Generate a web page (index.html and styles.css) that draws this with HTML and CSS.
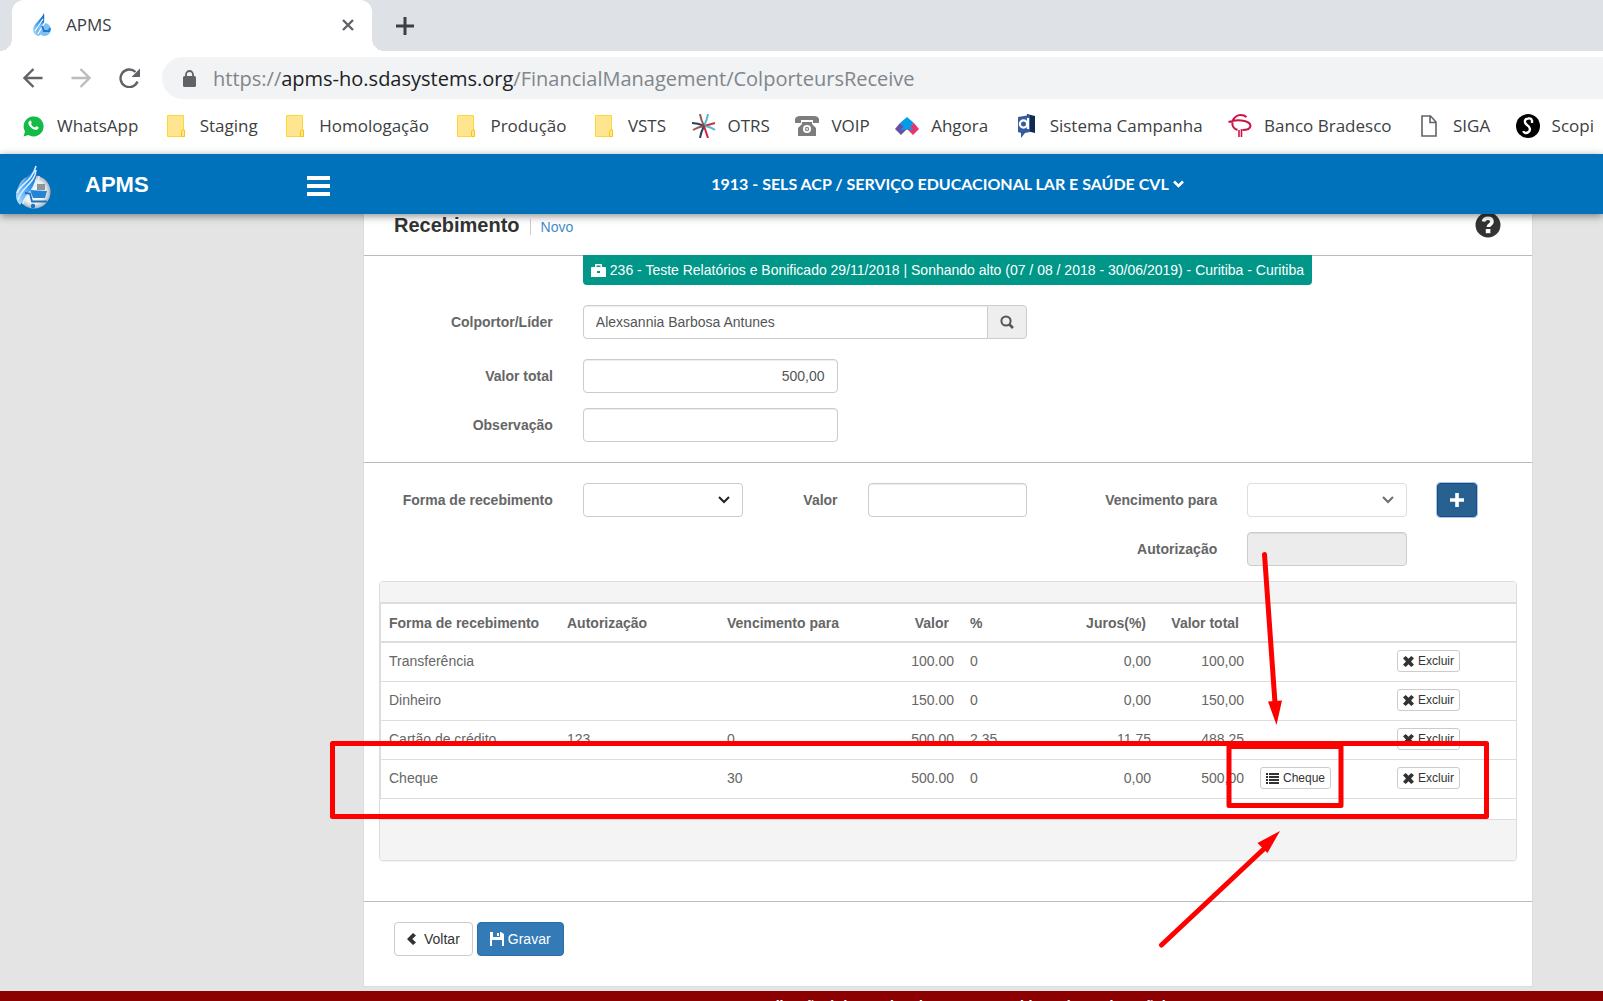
FILE: index.html
```html
<!DOCTYPE html>
<html lang="pt-BR">
<head>
<meta charset="utf-8">
<title>APMS</title>
<link rel="stylesheet" href="styles.css">
</head>
<body>
<svg class="defs" aria-hidden="true">
  <defs>
    <linearGradient id="drop" x1="0" y1="1" x2="1" y2="0"><stop offset="0" stop-color="#bfe6ff"/><stop offset=".5" stop-color="#3d9df0"/><stop offset="1" stop-color="#0b62b8"/></linearGradient>
    <radialGradient id="globe"><stop offset="0" stop-color="#ffffff"/><stop offset=".7" stop-color="#eceff2"/><stop offset="1" stop-color="#a9b4bf"/></radialGradient>
  </defs>
  <symbol id="folder" viewBox="0 0 18 22"><path d="M.5.5h16V15l1 1v5.500H.5z" fill="#ffe58f" stroke="#fdd835"/><path d="M14.500 21.500v-5l1-1.500h2v6.500z" fill="#ffe58f" stroke="#f5c518"/></symbol>
  <symbol id="times" viewBox="0 0 12 12"><path d="M3 0l3 3 3-3 3 2.500L8.800 6l3.200 3.500L9 12 6 9l-3 3-3-2.500L3.200 6 0 2.500z" fill="#333"/></symbol>
</svg>

<header class="browser">
  <div class="tabs">
    <div class="tab">
      <svg class="favicon" viewBox="0 0 20 24"><path d="M12 0C9 7 1 11 1 17c0 3 3 6 6 6 4-4 6-14 5-23z" fill="url(#drop)"/><circle cx="12.500" cy="16.500" r="6.500" fill="#7cc0f5"/><path d="M3 18l8-12M6 21l7-12" stroke="#fff" stroke-width="1.200"/><path d="M10 13l2 5h5l1-3" fill="none" stroke="#1e7ad0" stroke-width="2"/></svg>
      <span class="tab-title">APMS</span>
      <button class="icon-button" aria-label="Fechar guia"><svg width="14" height="14" viewBox="0 0 14 14"><path d="M2 2l10 10M12 2L2 12" stroke="#5f6368" stroke-width="2.400"/></svg></button>
    </div>
    <button class="icon-button new-tab" aria-label="Nova guia"><svg width="18" height="18" viewBox="0 0 18 18"><path d="M9 0v18M0 9h18" stroke="#3c4043" stroke-width="3"/></svg></button>
  </div>
  <div class="toolbar">
    <button class="icon-button" aria-label="Voltar página"><svg width="20" height="20" viewBox="0 0 20 20"><path d="M19.500 10H2M10.500 1L1.500 10l9 9" fill="none" stroke="#5f6368" stroke-width="2.400"/></svg></button>
    <button class="icon-button" aria-label="Avançar página"><svg width="20" height="20" viewBox="0 0 20 20"><path d="M.5 10H18M9.500 1l9 9-9 9" fill="none" stroke="#babcbe" stroke-width="2.400"/></svg></button>
    <button class="icon-button" aria-label="Recarregar"><svg width="22" height="20" viewBox="0 0 22 20"><path d="M18.500 13.500A8.800 8.800 0 1 1 16.500 4" fill="none" stroke="#5f6368" stroke-width="2.400"/><path d="M21 .5V9h-8.500z" fill="#5f6368"/></svg></button>
    <div class="address">
      <svg width="13" height="17" viewBox="0 0 13 17"><rect y="6" width="13" height="11" rx="1.500" fill="#5f6368"/><path d="M3 7V4.500a3.500 3.500 0 0 1 7 0V7" fill="none" stroke="#5f6368" stroke-width="1.800"/></svg>
      <span class="url">https://<b>apms-ho.sdasystems.org</b>/FinancialManagement/ColporteursReceive</span>
    </div>
  </div>
  <nav class="bookmarks" aria-label="Favoritos">
    <a href="#"><svg height="22" viewBox="0 0 21 22"><path d="M1 21.500l1.500-5A10 10 0 1 1 6 20z" fill="#12bb45"/><path d="M6.500 6.500c1-1.500 2-1 2.500.5s-.5 1.500-.5 2c1 2 2 3 4 3.500.5 0 1-1.500 1.500-1.300 2.500 1 2.500 1.300 1.500 2.800-2 2-6 0-7.500-2-1.500-1.500-3-4-1.500-5.500z" fill="#fff"/></svg>WhatsApp</a>
    <a href="#"><svg height="22"><use href="#folder"/></svg>Staging</a>
    <a href="#"><svg height="22"><use href="#folder"/></svg>Homologação</a>
    <a href="#"><svg height="22"><use href="#folder"/></svg>Produção</a>
    <a href="#"><svg height="22"><use href="#folder"/></svg>VSTS</a>
    <a href="#"><svg height="24" viewBox="0 0 24 24" fill="none" stroke-width="2"><path d="M12 12Q16 11 23 9" stroke="#b83b4c"/><path d="M12 12Q15 6 16 0M12 12Q19 13 23 16" stroke="#59b7cc"/><path d="M8 0Q9 6 12 12" stroke="#9c5a55"/><path d="M12 12Q6 9 0 9" stroke="#27425c"/><path d="M12 12Q6 13 1 16" stroke="#9c5a55"/><path d="M12 12Q9 18 8 24" stroke="#27425c"/><path d="M12 12Q14 18 16 24" stroke="#d02044"/></svg>OTRS</a>
    <a href="#"><svg height="20" viewBox="0 0 24 20"><path d="M0 7V3q1-3 5-3h14q4 0 5 3v4h-6V4H6v3zM7 6h10v2l4 4v8H3v-8l4-4z" fill="#7d7d7d"/><circle cx="12" cy="13" r="4" fill="#fff"/><circle cx="12" cy="13" r="2.200" fill="#888"/><circle cx="12" cy="13" r=".9" fill="#fff"/></svg>VOIP</a>
    <a href="#"><svg height="18" viewBox="0 0 24 18"><path d="M12 0l7 6-7 7-7-7z" fill="#009ee8"/><path d="M5 6l7 6-6 6-6-6z" fill="#6650a4"/><path d="M19 6l5 6-6 6-6-6z" fill="#e9336d"/><path d="M12 6l6 6-1 1-5-1-5 1-1-1z" fill="#009ee8"/></svg>Ahgora</a>
    <a href="#"><svg height="24" viewBox="0 0 18 24"><path d="M10 0l8 2v17l-8-2z" fill="#102a55"/><path d="M1 3l12-2v17l-5 1-4 5v-5l-3-1z" fill="#365d9c"/><circle cx="6.500" cy="10" r="3.600" fill="none" stroke="#fff" stroke-width="2.200"/><path d="M11 4v11" stroke="#fff" stroke-width="2.200"/></svg>Sistema Campanha</a>
    <a href="#"><svg height="23" viewBox="0 0 23 23" fill="none" stroke="#cf1244" stroke-width="2"><path d="M0 8q8-3 16-1 6 1.500 6 5c-.5 3-4 4-8 4M4 7Q7 1 12 1q4 0 6 2M4 8q-1 6 5 8"/><path d="M10.500 16v7M13 15v8" stroke-width="1.600"/></svg>Banco Bradesco</a>
    <a href="#"><svg height="22" viewBox="0 0 16 22" fill="none" stroke="#5f6368" stroke-width="1.600"><path d="M1 1h8.500L15 7v14H1zM9 1v6.500h6"/></svg>SIGA</a>
    <a href="#"><svg height="24" viewBox="0 0 24 24"><circle cx="12" cy="12" r="12" fill="#000"/><path d="M16 6q-1-2-4-1.500C8 5 8 9 11 11s4 5 1.500 7-5 .5-5-1M16 6v3" fill="none" stroke="#fff" stroke-width="2.400"/></svg>Scopi</a>
  </nav>
</header>

<div class="appbar">
  <a class="brand" href="#">
    <svg width="36" height="48" viewBox="0 0 36 48"><circle cx="19" cy="30" r="16.500" fill="url(#globe)"/><path d="M22 0C18 15 1 20 1 34c0 4 2 7 4 9C12 34 24 22 22 0z" fill="url(#drop)"/><path d="M3 38C6 25 20 22 21 8M8 42C10 30 24 26 24 14M2 31C5 22 17 20 21 4" fill="none" stroke="#d8f0ff" stroke-width="1.500"/><path d="M15 28l17 1-2 7H18z" fill="#2485d6"/><path d="M22 22h8v6h-8z" fill="#8d949a"/><path d="M10 31l5 .5 2 8h15" fill="none" stroke="#1d73bd" stroke-width="1.800"/><circle cx="18" cy="44" r="2.200" fill="#1d73bd"/></svg>
    <span>APMS</span>
  </a>
  <button class="menu" aria-label="Menu"><svg width="23" height="20" viewBox="0 0 23 20"><path d="M0 2h23M0 10h23M0 18h23" stroke="#fff" stroke-width="4"/></svg></button>
  <button class="entity">1913 - SELS ACP / SERVIÇO EDUCACIONAL LAR E SAÚDE CVL<svg width="11" height="8" viewBox="0 0 11 8"><path d="M1 1.500l4.500 4.500L10 1.500" fill="none" stroke="#fff" stroke-width="2.600"/></svg></button>
</div>

<main class="panel">
  <div class="panel-title">
    <h1>Recebimento</h1><a href="#">Novo</a>
    <button class="icon-button help" aria-label="Ajuda"><svg width="26" height="26" viewBox="0 0 26 26"><circle cx="13" cy="13" r="12.500" fill="#333"/><path d="M8.500 9.500Q9 6.300 13 6.300t4 3.500c0 2.700-3.700 2.500-3.700 5.200" fill="none" stroke="#fff" stroke-width="3.600"/><path d="M10.800 17h4.600v4.200h-4.600z" fill="#fff"/></svg></button>
  </div>

  <form class="section grid">
    <p class="campaign"><svg width="15" height="13" viewBox="0 0 15 13"><path d="M4 3V1q0-1 1-1h5q1 0 1 1v2h3q1 0 1 1v4H9V7H6v1H0V4q0-1 1-1zM5.500 1.500V3h4V1.500zM0 8h6v1h3V8h6v5H0z" fill="#fff"/></svg>236 - Teste Relatórios e Bonificado 29/11/2018 | Sonhando alto (07 / 08 / 2018 - 30/06/2019) - Curitiba - Curitiba</p>
    <label class="start" for="leader">Colportor/Líder</label>
    <div class="span5 lookup"><input id="leader" value="Alexsannia Barbosa Antunes"><button type="button" aria-label="Buscar"><svg width="14" height="14" viewBox="0 0 14 14" fill="none" stroke="#555"><circle cx="6" cy="6" r="4.600" stroke-width="2"/><path d="M9.300 9.300L13 13" stroke-width="2.600"/></svg></button></div>
    <label class="start gap-top" for="total">Valor total</label>
    <div class="span3 gap-top"><input id="total" class="number" value="500,00"></div>
    <label class="start" for="note">Observação</label>
    <div class="span3"><input id="note"></div>
  </form>

  <form class="section grid payment">
    <label class="start" for="method">Forma de recebimento</label>
    <div class="span2"><select id="method"><option></option></select></div>
    <label class="span1" for="amount">Valor</label>
    <div class="span2"><input id="amount"></div>
    <label class="span2" for="due">Vencimento para</label>
    <div class="span2"><select id="due" disabled><option></option></select></div>
    <div class="span1"><button type="button" class="add" aria-label="Adicionar"><svg width="14" height="14" viewBox="0 0 14 14"><path d="M7 0v14M0 7h14" stroke="#fff" stroke-width="3.600"/></svg></button></div>
    <label class="authorization" for="auth">Autorização</label>
    <div class="span2"><input id="auth" disabled></div>
  </form>

  <div class="list">
    <div class="list-head"></div>
    <table>
      <colgroup><col class="c178"><col class="c160"><col class="c143"><col class="c100"><col class="c90"><col class="c107"><col class="c93"><col class="c137"><col class="c128"></colgroup>
      <thead><tr><th>Forma de recebimento</th><th>Autorização</th><th>Vencimento para</th><th class="num">Valor</th><th>%</th><th class="num">Juros(%)</th><th class="num">Valor total</th><td></td><td></td></tr></thead>
      <tbody>
        <tr><td>Transferência</td><td></td><td></td><td class="num">100.00</td><td>0</td><td class="num">0,00</td><td class="num">100,00</td><td></td><td><button class="small"><svg width="11" height="11"><use href="#times"/></svg>Excluir</button></td></tr>
        <tr><td>Dinheiro</td><td></td><td></td><td class="num">150.00</td><td>0</td><td class="num">0,00</td><td class="num">150,00</td><td></td><td><button class="small"><svg width="11" height="11"><use href="#times"/></svg>Excluir</button></td></tr>
        <tr><td>Cartão de crédito</td><td>123</td><td>0</td><td class="num">500.00</td><td>2.35</td><td class="num">11,75</td><td class="num">488,25</td><td></td><td><button class="small"><svg width="11" height="11"><use href="#times"/></svg>Excluir</button></td></tr>
        <tr><td>Cheque</td><td></td><td>30</td><td class="num">500.00</td><td>0</td><td class="num">0,00</td><td class="num">500,00</td><td><button class="small"><svg width="13" height="11" viewBox="0 0 13 11"><path d="M0 1h2M3 1h10M0 4h2M3 4h10M0 7h2M3 7h10M0 10h2M3 10h10" stroke="#333" stroke-width="2"/></svg>Cheque</button></td><td><button class="small"><svg width="11" height="11"><use href="#times"/></svg>Excluir</button></td></tr>
      </tbody>
    </table>
    <div class="list-foot"></div>
  </div>

  <div class="actions">
    <button class="btn"><svg width="9" height="12" viewBox="0 0 9 12"><path d="M6 0l3 2.500L5.300 6 9 9.500 6 12 0 6z" fill="#333"/></svg>Voltar</button>
    <button class="btn primary"><svg width="14" height="14" viewBox="0 0 14 14"><path d="M0 0h3v5h7V0h1l3 2v12h-2V8H2v6H0zM7 1h2v3H7z" fill="#fff"/></svg>Gravar</button>
  </div>
</main>

<footer>Esta aplicação é do Serviço de testes no ambiente (Homologação)</footer>

<svg class="annotations" width="1603" height="1001" viewBox="0 0 1603 1001" aria-hidden="true">
  <g fill="none" stroke="#f00" stroke-width="5" stroke-linejoin="round">
    <rect x="332.500" y="743.500" width="1154" height="73"/>
    <rect x="1229" y="746.500" width="112" height="59"/>
    <path d="M1264.500 554.500L1275 703M1161.500 945L1267 846" stroke-linecap="round"/>
  </g>
  <path d="M1268 701.500l14-1L1276.500 725zM1280 831l-22.500 12 10 10z" fill="#f00"/>
</svg>
</body>
</html>
```
FILE: styles.css
```css
* { box-sizing: border-box; }
html { height: 100%; overflow: hidden; }
body {
  margin: 0;
  position: relative;
  background: #e4e4e4;
  font: 14px/20px "Liberation Sans", Arial, sans-serif;
  color: #666;
}
h1, p { margin: 0; }
a { color: inherit; text-decoration: none; }
button, input, select { font: inherit; color: inherit; }
svg { flex: none; }
.defs { position: absolute; width: 0; height: 0; }
.icon-button { display: flex; padding: 0; border: 0; background: none; }

/* Browser frame */
.browser { background: #fff; font-family: "Open Sans", "Noto Sans", sans-serif; color: #3c4043; }
.tabs { display: flex; align-items: center; height: 51px; padding-left: 12px; background: #dee1e6; }
.tab {
  position: relative;
  display: flex;
  align-items: center;
  gap: 14px;
  width: 360px;
  height: 51px;
  padding: 0 17px 2px 20px;
  border-radius: 12px 12px 0 0;
  background: #fff;
}
.tab::before, .tab::after {
  content: "";
  position: absolute;
  bottom: 0;
  width: 12px;
  height: 12px;
}
.tab::before { left: -12px; background: radial-gradient(circle at 0 0, #dee1e6 12px, #fff 12px); }
.tab::after { right: -12px; background: radial-gradient(circle at 100% 0, #dee1e6 12px, #fff 12px); }
.favicon { width: 20px; height: 24px; }
.tab-title { flex: 1; font-size: 17px; }
.new-tab { margin-left: 24px; }
.toolbar { display: flex; align-items: center; gap: 28px; height: 54px; padding-left: 23px; }
.address {
  display: flex;
  flex: 1;
  align-items: center;
  gap: 17px;
  height: 42px;
  margin-left: -7px;
  padding-left: 21px;
  border-radius: 21px 0 0 21px;
  background: #f1f3f4;
}
.url { padding-top: 2px; font-size: 20px; color: #80868b; }
.url b { font-weight: 400; color: #202124; }
.bookmarks {
  display: flex;
  justify-content: space-between;
  align-items: center;
  height: 49px;
  padding: 0 9px 8px 21px;
  font-size: 17px;
  white-space: nowrap;
}
.bookmarks a { display: flex; align-items: center; gap: 12px; }
.bookmarks svg { width: 24px; }

/* Application bar */
.appbar {
  position: relative;
  display: grid;
  grid-template-columns: 307px 23px 1fr;
  align-items: center;
  height: 60px;
  background: #0072bc;
  box-shadow: 0 2px 8px rgba(0, 0, 0, .45);
  color: #fff;
}
.brand { display: flex; align-items: center; gap: 34px; padding: 4px 0 0 15px; font-size: 22px; font-weight: 700; }
.brand span { padding-bottom: 2px; }
.menu { display: flex; padding: 3px 0 0; border: 0; background: none; }
.entity {
  display: flex;
  justify-self: center;
  align-items: center;
  gap: 4px;
  margin-right: 38px;
  padding: 0;
  border: 0;
  background: none;
  font: 700 16px/20px Lato, sans-serif;
}

/* Content panel */
.panel { margin: 0 70px 4px 363px; border: 1px solid #dcdcdc; border-top: 0; background: #fff; }
.panel-title { display: flex; align-items: center; height: 42px; padding: 0 31px 20px 30px; border-bottom: 1px solid #bbb; }
.panel-title h1 { color: #333; font-size: 20px; line-height: 20px; }
.panel-title a { margin: 4px 0 0 10px; padding-left: 10px; border-left: 1px solid #ccc; color: #428bca; line-height: 16px; }
.help { margin-left: auto; }
.grid { display: grid; grid-template-columns: repeat(12, 1fr); row-gap: 15px; padding: 0 15px 0 14px; }
.grid > * { padding: 0 15px; }
.section { border-bottom: 1px solid #bbb; padding-bottom: 20px; }
label { color: #666; font-weight: 700; line-height: 34px; text-align: right; white-space: nowrap; }
.start { grid-column: 1 / span 2; }
.span1 { grid-column: span 1; }
.span2 { grid-column: span 2; }
.span3 { grid-column: span 3; }
.span5 { grid-column: span 5; }
.authorization { grid-column: 8 / span 2; }
.gap-top { margin-top: 5px; }
.grid > .campaign {
  grid-column: 3 / span 10;
  justify-self: start;
  display: flex;
  align-items: center;
  gap: 4px;
  height: 30px;
  margin: -1px 15px 5px;
  padding: 0 8px;
  border-radius: 0 0 4px 4px;
  background: #009688;
  color: #fff;
  white-space: nowrap;
}
input, select {
  display: block;
  width: 100%;
  height: 34px;
  padding: 6px 12px;
  border: 1px solid #ccc;
  border-radius: 4px;
  background: #fff;
  color: #555;
  box-shadow: inset 0 1px 1px rgba(0, 0, 0, .075);
}
select {
  appearance: none;
  box-shadow: none;
  background: #fff url("data:image/svg+xml,%3Csvg xmlns='http://www.w3.org/2000/svg' width='12' height='8'%3E%3Cpath d='M1 1l5 5 5-5' fill='none' stroke='%23222' stroke-width='2'/%3E%3C/svg%3E") no-repeat right 12px center;
}
select:disabled { opacity: .65; }
input:disabled { background: #ececec; }
.number { text-align: right; }
.lookup { display: flex; }
.lookup input { border-radius: 4px 0 0 4px; }
.lookup button {
  display: flex;
  flex: none;
  align-items: center;
  justify-content: center;
  width: 40px;
  margin-left: -1px;
  border: 1px solid #ccc;
  border-radius: 0 4px 4px 0;
  background: #eee;
}
.payment { border: 0; padding-top: 20px; padding-bottom: 15px; }
.add {
  display: flex;
  align-items: center;
  justify-content: center;
  width: 40px;
  height: 34px;
  padding: 0;
  border: 1px solid #204d74;
  border-radius: 3px;
  background: #286090;
  outline: 1px solid #a0c3ff;
}

/* Payment list */
.list { margin: 0 15px; border: 1px solid #ddd; border-radius: 4px; overflow: hidden; box-shadow: 0 1px 1px rgba(0, 0, 0, .05); }
.list-head { height: 21px; background: #f4f4f4; border-bottom: 1px solid #ddd; }
table { width: 100%; table-layout: fixed; border-collapse: separate; border-spacing: 0; border: 1px solid #ddd; border-bottom: 0; }
th, td { height: 39px; padding: 0 8px 2px; border-bottom: 1px solid #ddd; text-align: left; white-space: nowrap; }
thead th, thead td { padding-bottom: 0; border-bottom-width: 2px; }
.num { text-align: right; }
th.num { padding-right: 13px; }
.c178 { width: 178px; }
.c160 { width: 160px; }
.c143 { width: 143px; }
.c100 { width: 100px; }
.c90 { width: 90px; }
.c107 { width: 107px; }
.c93 { width: 93px; }
.c137 { width: 137px; }
.c128 { width: 128px; }
.list-foot { height: 61px; border-top: 20px solid #fff; background: linear-gradient(#ddd 1px, #f4f4f4 1px); }
.small {
  display: inline-flex;
  align-items: center;
  gap: 4px;
  height: 22px;
  padding: 0 5px;
  border: 1px solid #ccc;
  border-radius: 3px;
  background: #fff;
  color: #333;
  font-size: 12px;
  line-height: 18px;
  vertical-align: middle;
}

/* Form actions */
.actions { display: flex; gap: 4px; margin-top: 40px; padding: 20px 30px 30px; border-top: 1px solid #bbb; }
.btn {
  display: flex;
  align-items: center;
  gap: 8px;
  height: 34px;
  padding: 0 12px;
  border: 1px solid #ccc;
  border-radius: 4px;
  background: #fff;
  color: #333;
}
.primary { gap: 4px; border-color: #2e6da4; background: #337ab7; color: #fff; }

footer { padding: 5px 0 12px 290px; background: #8b0000; color: #fff; font-weight: 700; text-align: center; }
.annotations { position: absolute; top: 0; left: 0; pointer-events: none; }
```
